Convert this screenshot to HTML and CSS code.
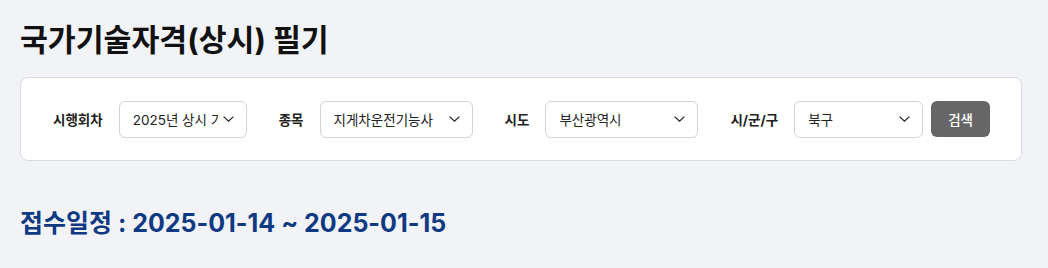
FILE: index.html
```html
<!DOCTYPE html>
<html lang="ko">
<head>
<meta charset="utf-8">
<title>국가기술자격(상시) 필기</title>
<link rel="stylesheet" href="styles.css">
</head>
<body>
<main class="page">
  <h1 class="title">국가기술자격(상시) 필기</h1>
  <section class="filter-card">
    <div class="field">
      <span class="field-label">시행회차</span>
      <div class="select select-sm"><span class="select-text">2025년 상시 기능사</span><svg class="chev" viewBox="0 0 11 6" width="11" height="6"><path d="M0.6 0.6 L5.5 5.2 L10.4 0.6" fill="none" stroke="#222" stroke-width="1.2"/></svg></div>
    </div>
    <div class="field">
      <span class="field-label">종목</span>
      <div class="select select-md"><span class="select-text">지게차운전기능사</span><svg class="chev" viewBox="0 0 11 6" width="11" height="6"><path d="M0.6 0.6 L5.5 5.2 L10.4 0.6" fill="none" stroke="#222" stroke-width="1.2"/></svg></div>
    </div>
    <div class="field">
      <span class="field-label">시도</span>
      <div class="select select-md"><span class="select-text">부산광역시</span><svg class="chev" viewBox="0 0 11 6" width="11" height="6"><path d="M0.6 0.6 L5.5 5.2 L10.4 0.6" fill="none" stroke="#222" stroke-width="1.2"/></svg></div>
    </div>
    <div class="field">
      <span class="field-label">시/군/구</span>
      <div class="select select-sm2"><span class="select-text">북구</span><svg class="chev" viewBox="0 0 11 6" width="11" height="6"><path d="M0.6 0.6 L5.5 5.2 L10.4 0.6" fill="none" stroke="#222" stroke-width="1.2"/></svg></div>
      <button class="btn-search" type="button">검색</button>
    </div>
  </section>
  <p class="period">접수일정 : 2025-01-14 ~ 2025-01-15</p>
</main>
</body>
</html>
```
FILE: styles.css
```css
* { box-sizing: border-box; }
html, body { margin: 0; padding: 0; }
body {
  background: #f2f3f7;
  font-family: Inter, "Noto Sans CJK KR", sans-serif;
  color: #111;
}
.page {
  padding: 18px 20px 0 20px;
}
.title {
  margin: 0;
  font-size: 30.3px;
  font-weight: 700;
  line-height: 44px;
  color: #111;
}
.filter-card {
  margin-top: 15px;
  width: 1002px;
  height: 84px;
  background: #fff;
  border: 1px solid #d9dbe0;
  border-radius: 8px;
  padding: 0 31px 0 32px;
  display: flex;
  align-items: center;
  gap: 32px;
}
.field {
  display: flex;
  align-items: center;
  flex: none;
}
.field-label {
  flex: none;
  white-space: nowrap;
  font-size: 13.5px;
  font-weight: 700;
  color: #222;
  margin-right: 16px;
}
.select {
  flex: none;
  height: 37px;
  border: 1px solid #cfd2d8;
  border-radius: 6px;
  background: #fff;
  display: flex;
  align-items: center;
  padding: 0 12px 0 13px;
  font-size: 13.5px;
  color: #222;
}
.select-text {
  flex: 1;
  min-width: 0;
  overflow: hidden;
  white-space: nowrap;
}
.chev { flex: none; margin-left: 3px; }
.select-sm { width: 128px; }
.select-md { width: 153px; }
.select-sm2 { width: 129px; }
.btn-search {
  flex: none;
  margin-left: 8px;
  width: 59px;
  height: 36px;
  border: none;
  border-radius: 6px;
  background: #666666;
  color: #fff;
  font-family: inherit;
  font-size: 13.5px;
  font-weight: 500;
}
.period {
  margin: 46px 0 0 0;
  font-size: 25px;
  font-weight: 700;
  color: #0f3a83;
  line-height: 32px;
}
```
